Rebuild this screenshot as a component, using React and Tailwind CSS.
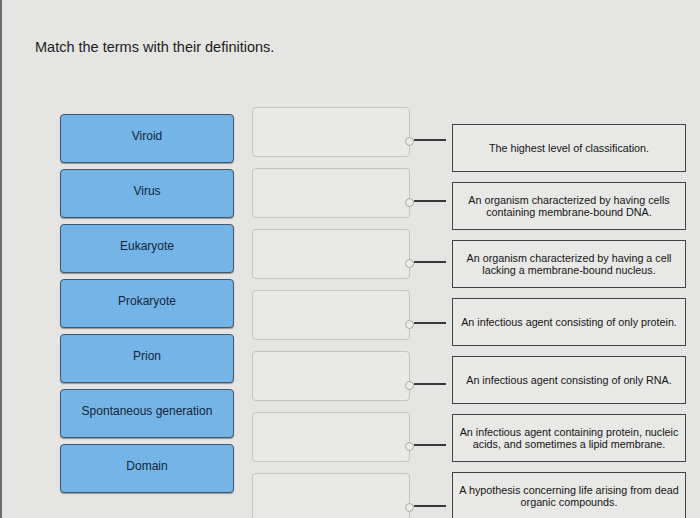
const terms = ['Viroid', 'Virus', 'Eukaryote', 'Prokaryote', 'Prion', 'Spontaneous generation', 'Domain']

const definitions = [
  ['The highest level of classification.'],
  ['An organism characterized by having cells', 'containing membrane-bound DNA.'],
  ['An organism characterized by having a cell', 'lacking a membrane-bound nucleus.'],
  ['An infectious agent consisting of only protein.'],
  ['An infectious agent consisting of only RNA.'],
  ['An infectious agent containing protein, nucleic', 'acids, and sometimes a lipid membrane.'],
  ['A hypothesis concerning life arising from dead', 'organic compounds.'],
]

function TermCard({ label }) {
  return (
    <div className="h-[49px] rounded-[4px] border-[1.5px] border-[#3f5a70] bg-[#74b4e6] shadow-[0_1px_1px_rgba(0,0,0,0.35)] flex items-center justify-center text-[12px] text-[#14263a] pb-[4px]">
      {label}
    </div>
  )
}

function DropSlot() {
  return (
    <div className="flex items-center">
      <div className="relative w-[158px] h-[50px] rounded-[4px] border border-[#c4c4c2] bg-[#e9e9e7]">
        <span className="absolute right-[-5px] top-[29px] w-[9px] h-[9px] rounded-full border border-[#a8a8a6] bg-[#ececea]" />
      </div>
      <div className="w-[32px] h-[2px] bg-[#3a3a3a] mt-[16px] ml-[4px]" />
    </div>
  )
}

function Definition({ lines }) {
  return (
    <div className="h-[48px] border-[1.5px] border-[#444] bg-[#e8e8e6] flex flex-col items-center justify-center text-[10.75px] leading-[12px] text-[#151515]">
      {lines.map((l) => (
        <span key={l}>{l}</span>
      ))}
    </div>
  )
}

export default function App() {
  return (
    <div
      className="w-[700px] h-[518px] overflow-hidden bg-[#e5e5e3] border-l-[2px] border-[#6b6b6b]"
      style={{ fontFamily: '"Liberation Sans", Arial, sans-serif' }}
    >
      <h1 className="pt-[37px] pl-[33px] text-[14.5px] text-[#1c1c1c]">Match the terms with their definitions.</h1>

      <div className="flex mt-[48px]">
        <div className="ml-[58px] w-[174px] mt-[7px] flex flex-col gap-[6px]">
          {terms.map((t) => (
            <TermCard key={t} label={t} />
          ))}
        </div>

        <div className="ml-[18px] flex flex-col gap-[11px]">
          {terms.map((t) => (
            <DropSlot key={t} />
          ))}
        </div>

        <div className="ml-[6px] mt-[17px] w-[234px] flex flex-col gap-[10px]">
          {definitions.map((d) => (
            <Definition key={d[0]} lines={d} />
          ))}
        </div>
      </div>
    </div>
  )
}
